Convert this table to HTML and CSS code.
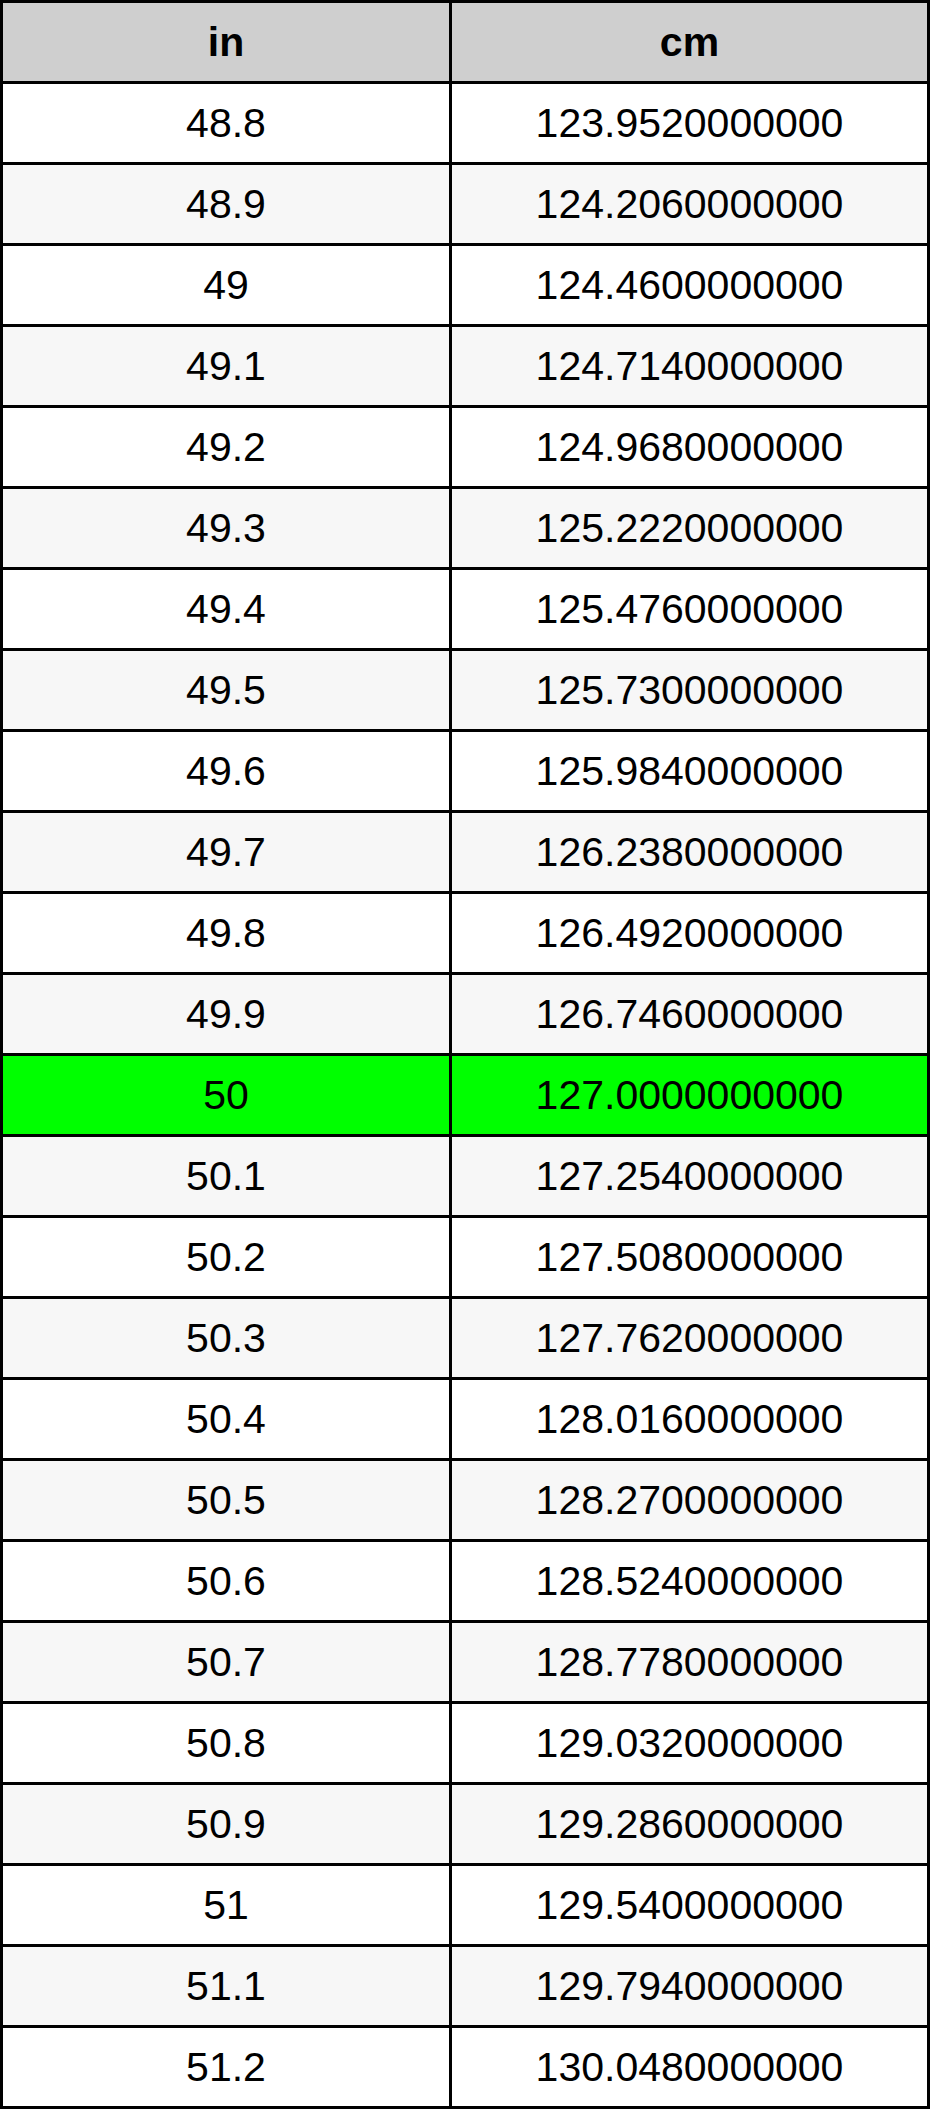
FILE: index.html
```html
<!DOCTYPE html>
<html>
<head>
<meta charset="utf-8">
<link rel="stylesheet" href="styles.css">
</head>
<body>
<table class="conv">
<colgroup><col class="c-in"><col class="c-cm"></colgroup>
<thead>
<tr><th>in</th><th>cm</th></tr>
</thead>
<tbody>
<tr><td>48.8</td><td>123.9520000000</td></tr>
<tr class="alt"><td>48.9</td><td>124.2060000000</td></tr>
<tr><td>49</td><td>124.4600000000</td></tr>
<tr class="alt"><td>49.1</td><td>124.7140000000</td></tr>
<tr><td>49.2</td><td>124.9680000000</td></tr>
<tr class="alt"><td>49.3</td><td>125.2220000000</td></tr>
<tr><td>49.4</td><td>125.4760000000</td></tr>
<tr class="alt"><td>49.5</td><td>125.7300000000</td></tr>
<tr><td>49.6</td><td>125.9840000000</td></tr>
<tr class="alt"><td>49.7</td><td>126.2380000000</td></tr>
<tr><td>49.8</td><td>126.4920000000</td></tr>
<tr class="alt"><td>49.9</td><td>126.7460000000</td></tr>
<tr class="hl"><td>50</td><td>127.0000000000</td></tr>
<tr class="alt"><td>50.1</td><td>127.2540000000</td></tr>
<tr><td>50.2</td><td>127.5080000000</td></tr>
<tr class="alt"><td>50.3</td><td>127.7620000000</td></tr>
<tr><td>50.4</td><td>128.0160000000</td></tr>
<tr class="alt"><td>50.5</td><td>128.2700000000</td></tr>
<tr><td>50.6</td><td>128.5240000000</td></tr>
<tr class="alt"><td>50.7</td><td>128.7780000000</td></tr>
<tr><td>50.8</td><td>129.0320000000</td></tr>
<tr class="alt"><td>50.9</td><td>129.2860000000</td></tr>
<tr><td>51</td><td>129.5400000000</td></tr>
<tr class="alt"><td>51.1</td><td>129.7940000000</td></tr>
<tr><td>51.2</td><td>130.0480000000</td></tr>
</tbody>
</table>
</body>
</html>
```
FILE: styles.css
```css
html, body {
  margin: 0;
  padding: 0;
  background: #fff;
}
.conv {
  width: 930px;
  table-layout: fixed;
  border-collapse: separate;
  border-spacing: 3px;
  background: #000;
  font-family: "Liberation Sans", Arial, sans-serif;
  font-size: 41px;
  color: #000;
}
.c-in { width: 446px; }
.c-cm { width: 475px; }
.conv th,
.conv td {
  height: 78px;
  padding: 0;
  text-align: center;
  vertical-align: middle;
  background: #fff;
}
.conv th {
  background: #cfcfcf;
  font-weight: bold;
}
.conv tr.alt td { background: #f7f7f7; }
.conv tr.hl td { background: #00ff00; }
```
